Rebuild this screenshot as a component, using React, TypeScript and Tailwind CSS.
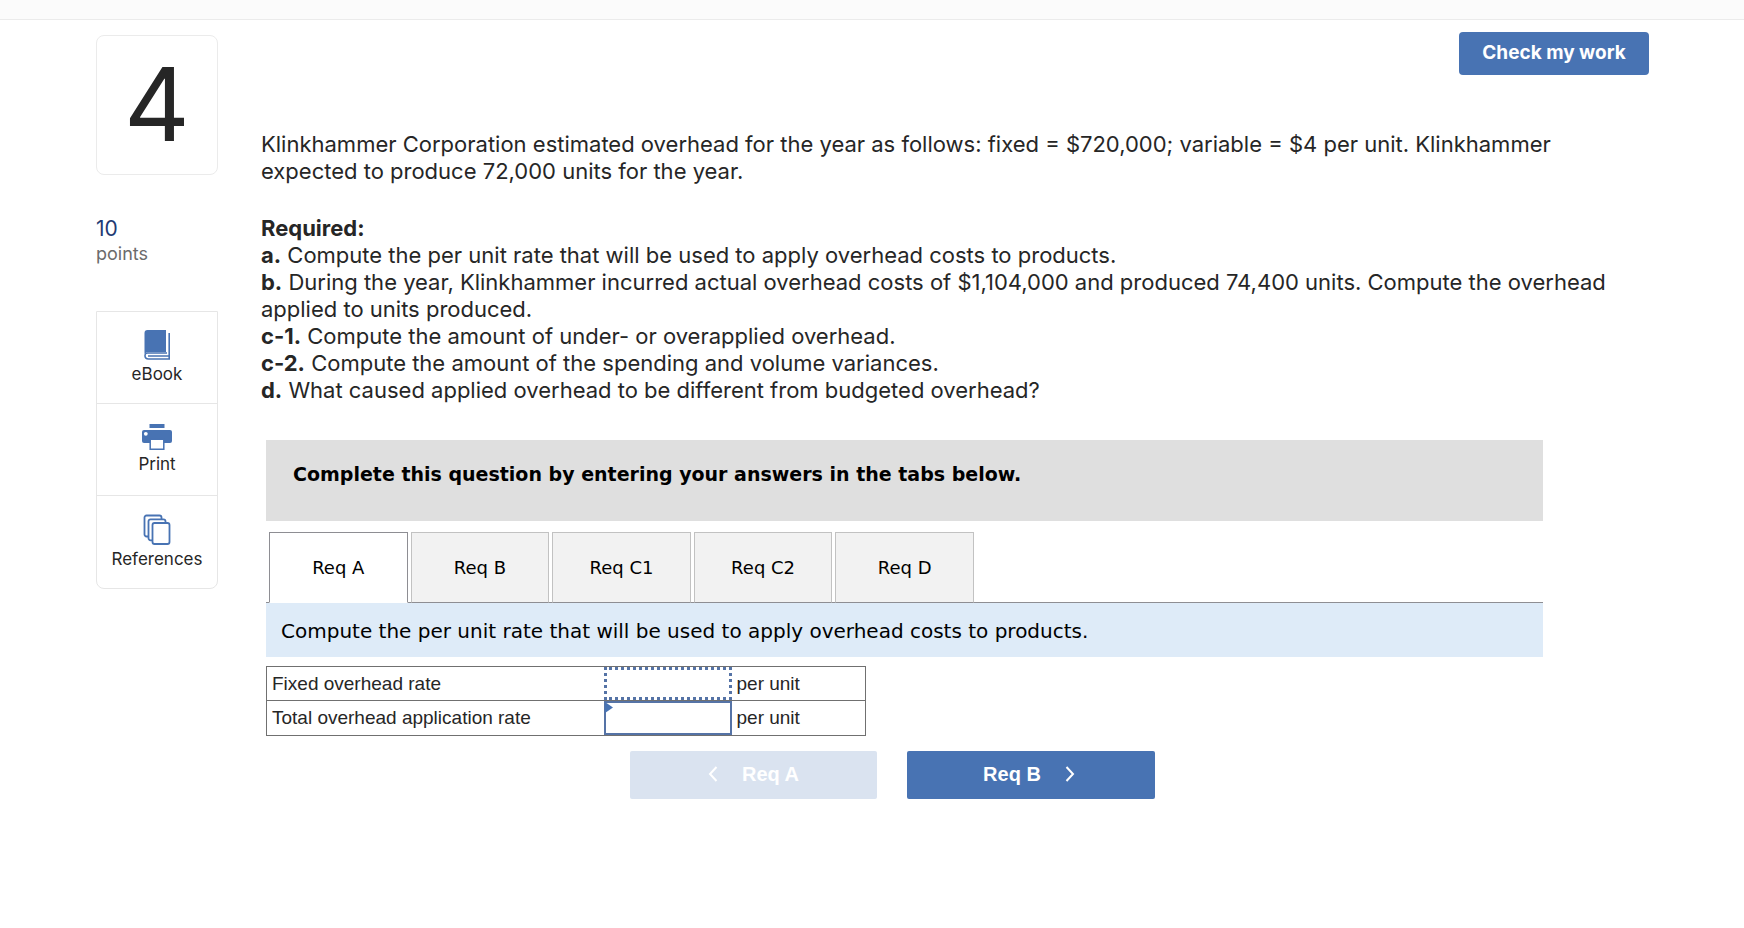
import { useState } from "react";

const TABS = ["Req A", "Req B", "Req C1", "Req C2", "Req D"];

const REQUIREMENTS: Array<[string, string]> = [
  ["a.", "Compute the per unit rate that will be used to apply overhead costs to products."],
  [
    "b.",
    "During the year, Klinkhammer incurred actual overhead costs of $1,104,000 and produced 74,400 units. Compute the overhead applied to units produced.",
  ],
  ["c-1.", "Compute the amount of under- or overapplied overhead."],
  ["c-2.", "Compute the amount of the spending and volume variances."],
  ["d.", "What caused applied overhead to be different from budgeted overhead?"],
];

function BookIcon() {
  return (
    <svg width="28" height="32" viewBox="0 0 28 32" aria-hidden="true">
      <path d="M4.500 1H23v22H6q-3.200 0-4.500 2V4q0-3 3-3z" fill="#4873b3" />
      <path
        d="M26.200 4v26H5.500q-3.500 0-3.500-3.200T5.500 24H24M5 27h21"
        fill="none"
        stroke="#4873b3"
        strokeWidth="1.600"
      />
    </svg>
  );
}

function PrintIcon() {
  return (
    <svg width="32" height="28" viewBox="0 0 32 28" aria-hidden="true">
      <path d="M8.500 1h15v4h-15z" fill="#4873b3" />
      <path d="M3 7h26q2 0 2 2v9q0 2-2 2H3q-2 0-2-2V9q0-2 2-2z" fill="#4873b3" />
      <circle cx="4.800" cy="10.800" r="1.900" fill="#fff" />
      <path d="M9.200 16.200h13.600v10H9.200z" fill="#fff" stroke="#4873b3" strokeWidth="1.500" />
    </svg>
  );
}

function PagesIcon() {
  return (
    <svg width="28" height="32" viewBox="0 0 28 32" fill="#fff" stroke="#4873b3" strokeWidth="1.800" aria-hidden="true">
      <rect x="1.500" y="1.500" width="17" height="21" rx="2" />
      <rect x="5.500" y="5.300" width="17" height="21" rx="2" />
      <rect x="9.500" y="9" width="17" height="21" rx="2" />
    </svg>
  );
}

const TOOLS = [
  { label: "eBook", Icon: BookIcon },
  { label: "Print", Icon: PrintIcon },
  { label: "References", Icon: PagesIcon },
];

function Sidebar() {
  return (
    <aside className="w-[122px] shrink-0 pt-[15px]">
      <div className="flex h-[140px] items-center justify-center rounded-lg border border-[#ebebeb] pb-[2px] text-[102px] leading-none text-[#262626]">
        4
      </div>
      <div className="mt-10">
        <div className="text-[21px] leading-[27px] text-[#1f3b74]">10</div>
        <div className="text-[18px] leading-6 text-[#6b6b6b]">points</div>
      </div>
      <nav className="mt-[45px] divide-y divide-[#e6e6e6] rounded-b-lg border border-[#e6e6e6]">
        {TOOLS.map(({ label, Icon }) => (
          <a key={label} href="#" className="flex h-[92px] flex-col items-center justify-center gap-px text-[17px] leading-6 text-[#262626]">
            <Icon />
            {label}
          </a>
        ))}
      </nav>
    </aside>
  );
}

function Question() {
  return (
    <div className="pr-4 text-[22px] leading-[27px] text-[#262626]">
      <p>
        Klinkhammer Corporation estimated overhead for the year as follows: fixed = $720,000; variable = $4 per unit.
        Klinkhammer expected to produce 72,000 units for the year.
      </p>
      <p className="mt-[30px] font-bold">Required:</p>
      {REQUIREMENTS.map(([mark, text]) => (
        <p key={mark}>
          <b>{mark}</b> {text}
        </p>
      ))}
    </div>
  );
}

function AnswerTable() {
  return (
    <table className="mt-[9px] w-[600px] table-fixed border-collapse border border-[#707070] font-['Liberation_Sans',Arial,sans-serif] text-[19px] leading-6 text-[#262626]">
      <colgroup>
        <col className="w-[337px]" />
        <col className="w-[128px]" />
        <col />
      </colgroup>
      <tbody>
        <tr className="h-[34px] border-b border-[#707070]">
          <td className="px-[5px] py-0">
            <label htmlFor="fixed-rate">Fixed overhead rate</label>
          </td>
          <td className="p-0">
            <input id="fixed-rate" className="block h-[33px] w-full border-3 border-dotted border-[#5573a6] px-2 text-right outline-none" />
          </td>
          <td className="px-[5px] py-0">per unit</td>
        </tr>
        <tr className="h-[34px]">
          <td className="px-[5px] py-0">
            <label htmlFor="total-rate">Total overhead application rate</label>
          </td>
          <td className="relative p-0">
            <input id="total-rate" className="block h-[34px] w-full border-2 border-[#5573a6] px-2 text-right outline-none" />
            <svg className="absolute top-0 left-0" width="9" height="12" viewBox="0 0 9 12" aria-hidden="true">
              <path d="M1 1l8 5.500-8 5.500z" fill="#4873b3" />
            </svg>
          </td>
          <td className="px-[5px] py-0">per unit</td>
        </tr>
      </tbody>
    </table>
  );
}

function Chevron({ back = false }: { back?: boolean }) {
  return (
    <svg width="10" height="16" viewBox="0 0 10 16" fill="none" stroke="currentColor" strokeWidth="2" aria-hidden="true">
      <path d={back ? "M8.500 1L2 8l6.500 7" : "M1.500 1L8 8l-6.500 7"} />
    </svg>
  );
}

export default function App() {
  const [active, setActive] = useState("Req A");

  return (
    <div className="min-h-screen bg-white font-[Inter,sans-serif]">
      <div className="h-5 border-b border-[#ebebeb] bg-[#fbfbfb]" />
      <div className="flex gap-[43px] pr-[95px] pl-24">
        <Sidebar />
        <main className="min-w-0 flex-1 pt-3">
          <div className="flex justify-end">
            <button className="h-[43px] w-[190px] rounded bg-[#4873b3] text-[19px] font-bold text-white">
              Check my work
            </button>
          </div>
          <div className="mt-14">
            <Question />
          </div>

          <section className="mt-9 mr-[106px] ml-[5px] font-['DejaVu_Sans',Verdana,sans-serif] text-black">
            <div className="h-[81px] bg-[#dfdfdf] px-[27px] pt-5 text-[19px] leading-7 font-bold">
              Complete this question by entering your answers in the tabs below.
            </div>
            <div className="mt-[11px] border-b border-[#8e8e93] pl-[3px]">
              <div role="tablist" className="-mb-px grid w-[705px] grid-cols-5 gap-[3px]">
                {TABS.map((tab) => (
                  <button
                    key={tab}
                    role="tab"
                    aria-selected={tab === active}
                    onClick={() => setActive(tab)}
                    className={
                      tab === active
                        ? "h-[71px] border border-[#8e8e93] border-b-white bg-white text-[18px]"
                        : "h-[71px] border border-[#c2c2c2] border-b-[#8e8e93] bg-[#f2f2f2] text-[18px]"
                    }
                  >
                    {tab}
                  </button>
                ))}
              </div>
            </div>
            <div className="bg-[#deebf8] px-[15px] pt-[14px] pb-3 text-[20px] leading-7">
              Compute the per unit rate that will be used to apply overhead costs to products.
            </div>
            <AnswerTable />
            <div className="mt-[15px] flex justify-center gap-[30px] pr-6 font-['Liberation_Sans',Arial,sans-serif] text-[20px] font-bold text-white">
              <button disabled className="flex h-12 w-[247px] items-center justify-center gap-6 rounded-xs bg-[#dae3f0] pb-[2px]">
                <Chevron back />
                Req A
              </button>
              <button className="flex h-12 w-[248px] items-center justify-center gap-6 rounded-xs bg-[#4873b3] pr-1 pb-[2px]">
                Req B
                <Chevron />
              </button>
            </div>
          </section>
        </main>
      </div>
    </div>
  );
}
